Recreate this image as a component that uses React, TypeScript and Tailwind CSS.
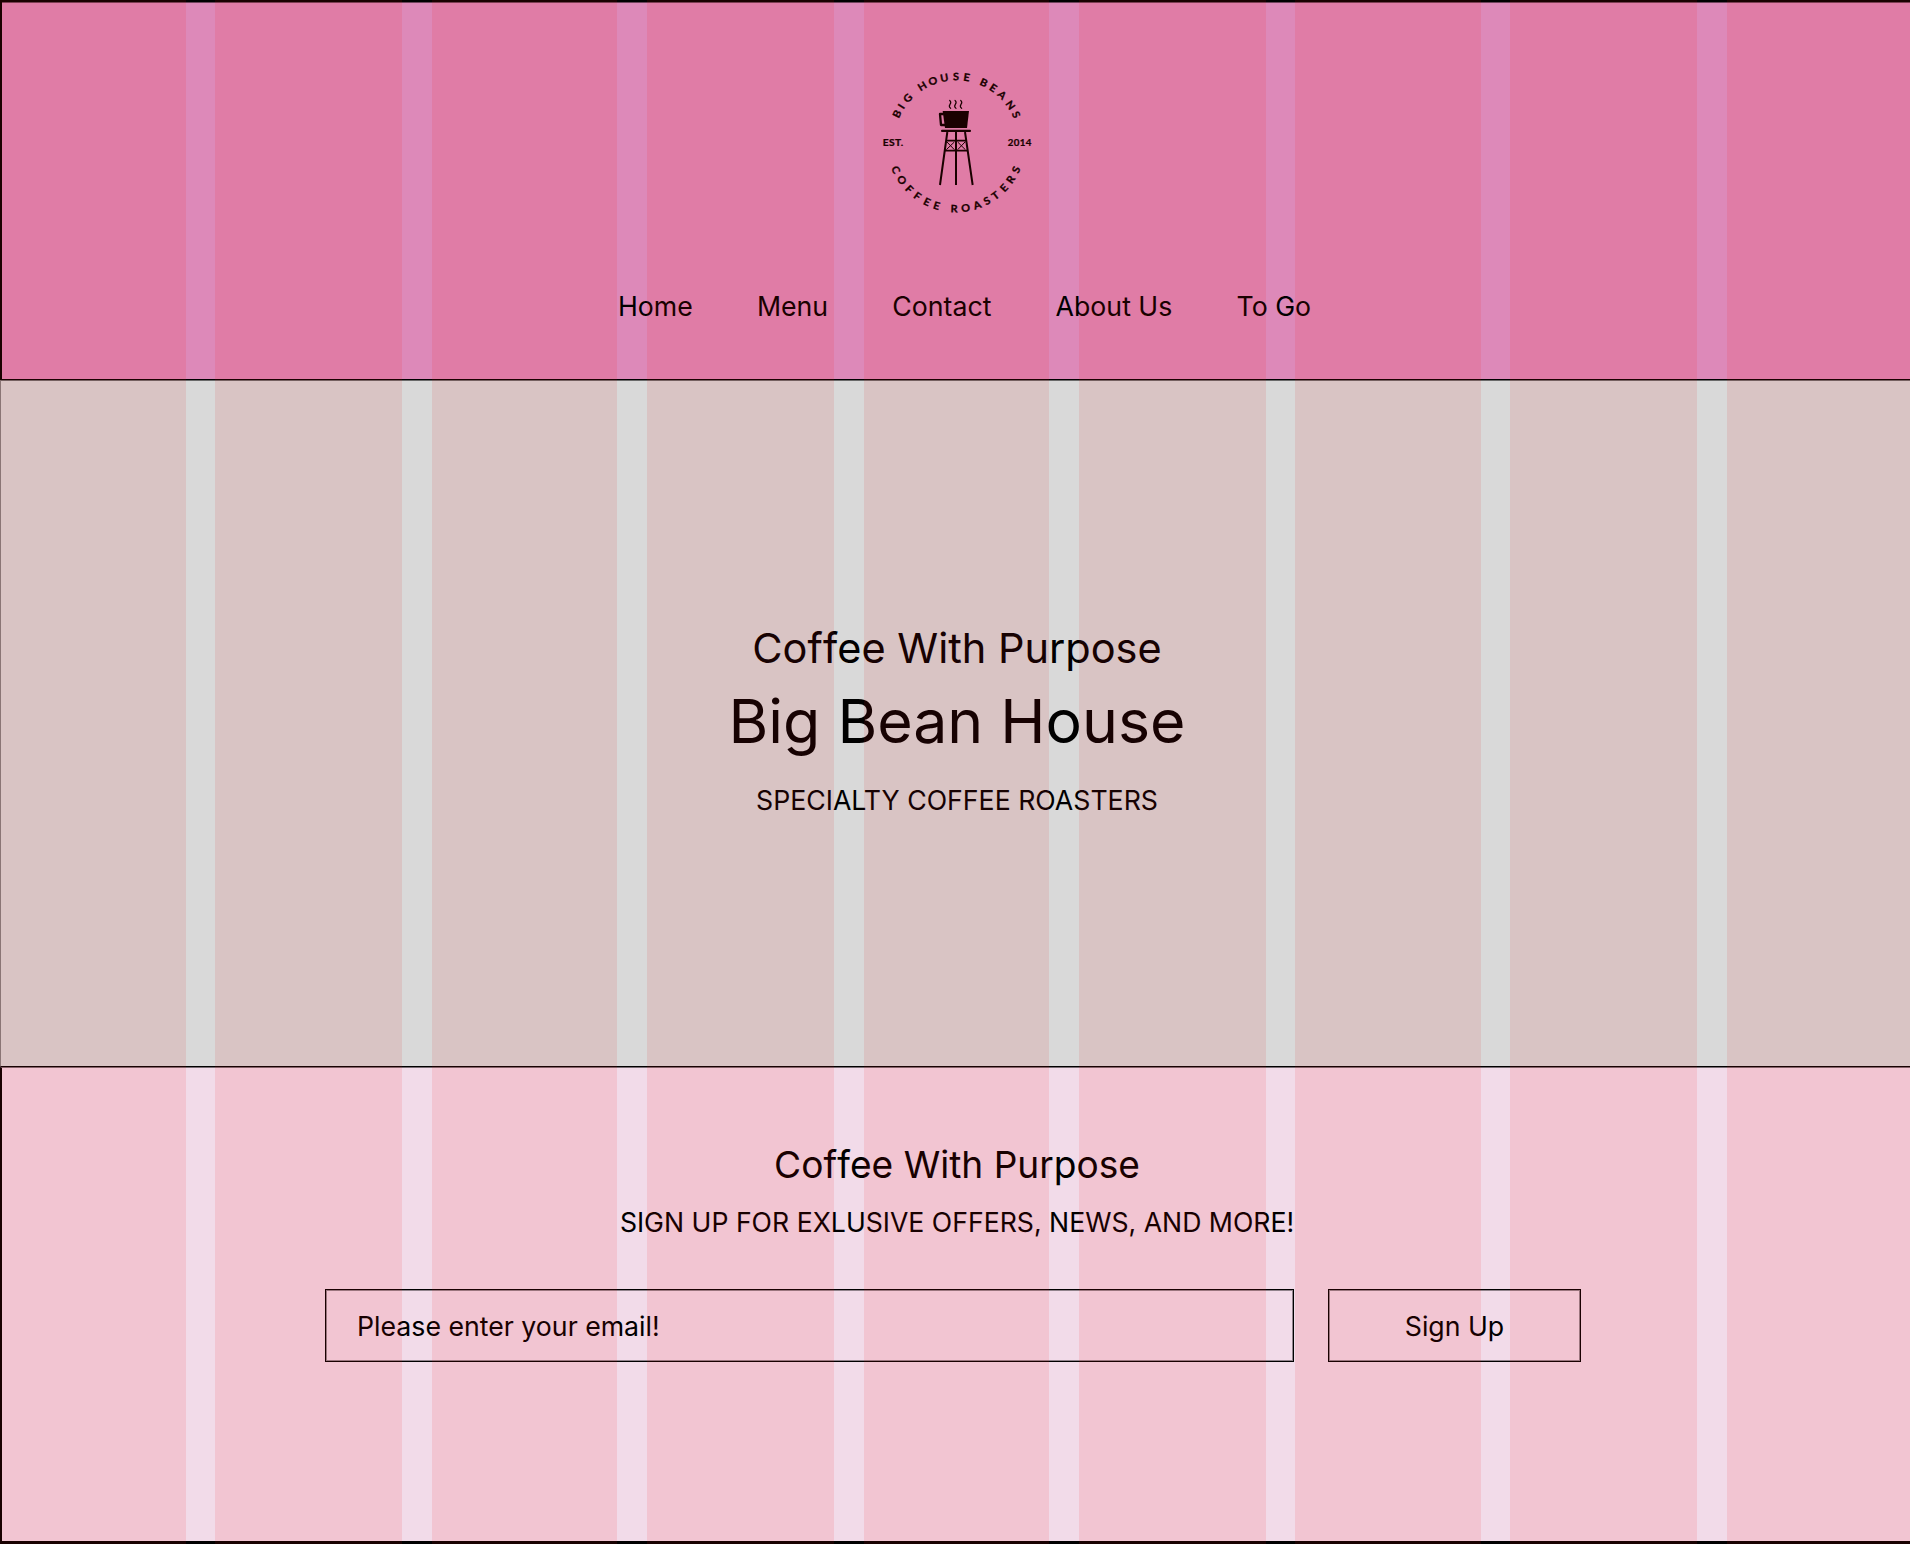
type Glyph = [char: string, angle: number];

const topArc: Glyph[] = [
  ['B', -64.2], ['I', -56.6], ['G', -47.4],
  ['H', -31.2], ['O', -20.8], ['U', -10.6], ['S', -0.3], ['E', 8.9],
  ['B', 24.5], ['E', 34], ['A', 43.8], ['N', 55.2], ['S', 64.9],
];

const bottomArc: Glyph[] = [
  ['C', 65.7], ['O', 55.4], ['F', 45.2], ['F', 35.8], ['E', 26.2], ['E', 17.2],
  ['R', 1.7], ['O', -8.4], ['A', -18.7], ['S', -28], ['T', -36.7], ['E', -46.6], ['R', -56.1], ['S', -65.7],
];

function Logo() {
  return (
    <svg viewBox="0 0 522 495" className="ml-[2px] h-[165px] w-[174px] font-['Lato',sans-serif] font-bold" fill="#000" aria-label="Big House Beans">
      <g fontSize="31" textAnchor="middle" stroke="#000" strokeWidth="0.9">
        {topArc.map(([c, a], i) => (
          <text key={i} transform={`translate(259 248) rotate(${a}) scale(1.06 1)`} y={-187}>{c}</text>
        ))}
        {bottomArc.map(([c, a], i) => (
          <text key={i} transform={`translate(258 248) rotate(${a}) scale(1.06 1)`} y={209}>{c}</text>
        ))}
      </g>
      <g fontSize="27" letterSpacing="1" stroke="#000" strokeWidth="0.7">
        <text x="38" y="257" textLength="63" lengthAdjust="spacingAndGlyphs">EST.</text>
        <text x="413" y="257" textLength="72" lengthAdjust="spacingAndGlyphs">2014</text>
      </g>
      <g fill="none" stroke="#000" strokeWidth="3.5" strokeLinecap="round">
        <path d="M239 121c6 5 4 8 1 12s-3 8 2 12" />
        <path d="M255 121c6 5 4 8 1 12s-3 8 2 12" />
        <path d="M272 121c6 5 4 8 1 12s-3 8 2 12" />
      </g>
      <path d="M218 153h79l-6 51h-66z" />
      <path d="M221 162h-11l3 33h12" fill="none" stroke="#000" strokeWidth="7" strokeLinejoin="round" />
      <rect x="213" y="209" width="90" height="7" rx="3" />
      <g fill="none" stroke="#000" strokeWidth="6">
        <path d="M232 216L210 375M258 216V375M285 216L308 375" />
        <path d="M228 242H289M224 272H293" strokeWidth="5" />
        <path d="M231 246L253 269M253 246L229 269M263 246L286 269M285 246L263 269" strokeWidth="3" />
      </g>
    </svg>
  );
}

function ColumnGuides({ className }: { className: string }) {
  return (
    <div className={`flex *:h-full *:shrink-0 ${className}`}>
      <div className="mr-[29px] w-[186px]" />
      <div className="mr-[30px] w-[187px]" />
      <div className="mr-[30px] w-[185px]" />
      <div className="mr-[30px] w-[187px]" />
      <div className="mr-[30px] w-[185px]" />
      <div className="mr-[29px] w-[187px]" />
      <div className="mr-[29px] w-[186px]" />
      <div className="mr-[30px] w-[187px]" />
      <div className="w-[183px]" />
    </div>
  );
}

function Tagline() {
  return (
    <>
      Co<span className="tracking-[0.2px]">f</span>fee With Purpose
    </>
  );
}

export default function App() {
  return (
    <div className="relative flex h-[1544px] w-[1910px] flex-col overflow-hidden font-['Inter',sans-serif] text-black">
      <header className="flex h-[380px] flex-col items-center border-t-2 border-b border-l-2 border-black bg-[#dd89b9] pt-[58px] shadow-[inset_0_1px_0_rgba(0,0,0,0.5)]">
        <Logo />
        <nav className="mt-[61px] ml-[17px] flex gap-[64.2px] text-[26.7px] leading-10">
          <a>Home</a>
          <a>Menu</a>
          <a>Contact</a>
          <a>About Us</a>
          <a>To Go</a>
        </nav>
      </header>

      <section className="flex h-[687px] flex-col items-center border-t border-b border-l border-t-black/50 border-b-black border-l-black/40 bg-[#d9d9d9] pt-[242px] pl-[3px]">
        <p className="text-[41.5px] leading-[50px]"><Tagline /></p>
        <h1 className="mt-3 text-[60.8px] leading-[72px]">Big Bean House</h1>
        <p className="mt-[27px] text-[26.7px] leading-8">SPECIALTY COFFEE ROASTERS</p>
      </section>

      <section className="flex flex-1 flex-col items-center border-t border-b-[3px] border-l-2 border-black border-t-black/50 bg-[#f2dbe9] pt-[74px]">
        <h2 className="ml-[2px] text-[37.1px] leading-[45px]"><Tagline /></h2>
        <p className="mt-[19px] ml-[2px] text-[26.65px] leading-8">SIGN UP FOR EXLUSIVE OFFERS, NEWS, AND MORE!</p>
        <form className="mt-[51px] mr-[6px] flex gap-[34px] text-[26.7px] *:h-[73px] *:border *:border-black *:pt-[2px] *:shadow-[inset_0_0_0_1px_rgba(0,0,0,0.4)]">
          <div className="flex w-[969px] items-center pl-[31px]">Please enter your email!</div>
          <button type="button" className="w-[253px]">Sign Up</button>
        </form>
      </section>

      <div className="pointer-events-none absolute inset-0 flex flex-col">
        <ColumnGuides className="h-[380px] *:bg-[rgba(252,5,0,0.1)]" />
        <ColumnGuides className="h-[687px] *:bg-[rgba(220,20,15,0.105)]" />
        <ColumnGuides className="flex-1 *:bg-[rgba(250,12,8,0.1)]" />
      </div>
    </div>
  );
}
